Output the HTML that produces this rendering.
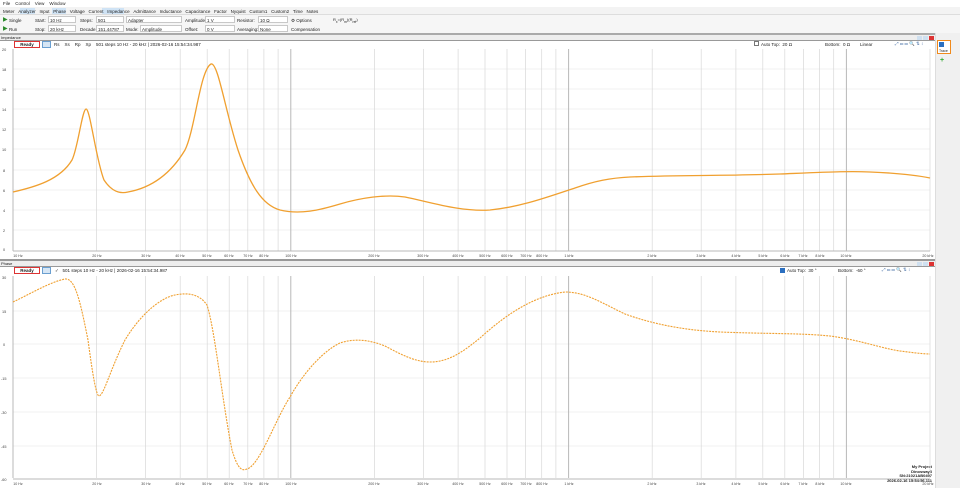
<!DOCTYPE html>
<html><head><meta charset="utf-8"><style>
*{margin:0;padding:0;box-sizing:border-box}
body{width:960px;height:488px;overflow:hidden;background:#fff;font-family:"Liberation Sans",sans-serif;font-size:4.5px;color:#222;position:relative}
.a{position:absolute;white-space:nowrap}
.in{position:absolute;height:7px;border:1px solid #c8c8c8;background:#fff}
</style></head><body>
<!-- menu -->
<div class="a" style="left:0;top:0;width:960px;height:7px;background:#fff"></div>
<div class="a" style="left:3px;top:1px">File&nbsp;&nbsp;&nbsp;&nbsp;Control&nbsp;&nbsp;&nbsp;&nbsp;View&nbsp;&nbsp;&nbsp;&nbsp;Window</div>
<!-- tabs -->
<div class="a" style="left:0;top:7px;width:960px;height:8px;background:#f3f3f3;border-bottom:1px solid #ddd"></div>
<div class="a" style="left:20px;top:8px;width:15px;height:6px;background:#cfe3f5"></div>
<div class="a" style="left:52px;top:8px;width:14px;height:6px;background:#cfe3f5"></div>
<div class="a" style="left:102px;top:8px;width:22px;height:6px;background:#cfe3f5"></div>
<div class="a" style="left:3px;top:9px">Meter&nbsp;&nbsp;&nbsp;Analyzer&nbsp;&nbsp;&nbsp;Input&nbsp;&nbsp;&nbsp;Phase&nbsp;&nbsp;&nbsp;Voltage&nbsp;&nbsp;&nbsp;Current&nbsp;&nbsp;&nbsp;Impedance&nbsp;&nbsp;&nbsp;Admittance&nbsp;&nbsp;&nbsp;Inductance&nbsp;&nbsp;&nbsp;Capacitance&nbsp;&nbsp;&nbsp;Factor&nbsp;&nbsp;&nbsp;Nyquist&nbsp;&nbsp;&nbsp;Custom1&nbsp;&nbsp;&nbsp;Custom2&nbsp;&nbsp;&nbsp;Time&nbsp;&nbsp;&nbsp;Notes</div>
<!-- toolbar -->
<div class="a" style="left:0;top:15px;width:960px;height:19px;background:#f6f6f6"></div>
<div class="a" style="left:3px;top:16px;color:#2a8a2a;font-size:6px">▶</div>
<div class="a" style="left:9px;top:18px">Single</div>
<div class="a" style="left:3px;top:25px;color:#2a8a2a;font-size:6px">▶</div>
<div class="a" style="left:9px;top:27px">Run</div>
<div class="a" style="left:35px;top:18px">Start:</div><div class="in" style="left:48px;top:16px;width:28px"></div><div class="a" style="left:50px;top:18px">10 Hz</div>
<div class="a" style="left:35px;top:27px">Stop:</div><div class="in" style="left:48px;top:25px;width:28px"></div><div class="a" style="left:50px;top:27px">20 kHz</div>
<div class="a" style="left:80px;top:18px">Steps:</div><div class="in" style="left:96px;top:16px;width:28px"></div><div class="a" style="left:98px;top:18px">501</div>
<div class="a" style="left:80px;top:27px">Decade:</div><div class="in" style="left:96px;top:25px;width:28px"></div><div class="a" style="left:98px;top:27px">151.44787</div>
<div class="in" style="left:126px;top:16px;width:56px"></div><div class="a" style="left:128px;top:18px">Adapter</div>
<div class="a" style="left:126px;top:27px">Mode:</div><div class="in" style="left:140px;top:25px;width:42px"></div><div class="a" style="left:142px;top:27px">Amplitude</div>
<div class="a" style="left:185px;top:18px">Amplitude:</div><div class="in" style="left:205px;top:16px;width:30px"></div><div class="a" style="left:207px;top:18px">1 V</div>
<div class="a" style="left:185px;top:27px">Offset:</div><div class="in" style="left:205px;top:25px;width:30px"></div><div class="a" style="left:207px;top:27px">0 V</div>
<div class="a" style="left:237px;top:18px">Resistor:</div><div class="in" style="left:258px;top:16px;width:30px"></div><div class="a" style="left:260px;top:18px">10 Ω</div>
<div class="a" style="left:237px;top:27px">Averaging:</div><div class="in" style="left:258px;top:25px;width:30px"></div><div class="a" style="left:260px;top:27px">None</div>
<div class="a" style="left:291px;top:18px">⚙ Options</div>
<div class="a" style="left:291px;top:27px">Compensation</div>
<div class="a" style="left:333px;top:17px;font-size:4px">R<sub>x</sub>=(R<sub>m</sub>)(R<sub>ref</sub>)</div>
<!-- Impedance title -->
<div class="a" style="left:0;top:33px;width:935px;height:2px;background:#aaa"></div>
<div class="a" style="left:0;top:35px;width:935px;height:5px;background:#eee"></div>
<div class="a" style="left:1px;top:35px;font-size:4px">Impedance</div>
<div class="a" style="left:0;top:40px;width:935px;height:1px;background:#999"></div>
<!-- header 1 -->
<div class="a" style="left:14px;top:41px;width:26px;height:7px;border:1px solid #d33;background:#fff;font-weight:bold;text-align:center;line-height:5px">Ready</div>
<div class="a" style="left:42px;top:41px;width:9px;height:7px;border:1px solid #6a9fd0;background:#d6e6f5"></div>
<div class="a" style="left:54px;top:42px">Rs&nbsp;&nbsp;&nbsp;&nbsp;Xs&nbsp;&nbsp;&nbsp;&nbsp;Rp&nbsp;&nbsp;&nbsp;&nbsp;Xp&nbsp;&nbsp;&nbsp;&nbsp;501 steps 10 Hz - 20 kHz | 2026-02-16 15:54:34.987</div>
<div class="a" style="left:754px;top:41px;width:5px;height:5px;border:1px solid #777"></div>
<div class="a" style="left:761px;top:42px">Auto Top:&nbsp;&nbsp;20 Ω</div>
<div class="a" style="left:825px;top:42px">Bottom:&nbsp;&nbsp;0 Ω</div>
<div class="a" style="left:860px;top:42px">Linear</div>
<div class="a" style="left:895px;top:41px;color:#5a7fb0">⤢ ▭ ▭ 🔍 ⇅ ↕</div>
<div class="a" style="left:917px;top:36px;width:5px;height:4px;background:#cfe0f0"></div>
<div class="a" style="left:923px;top:36px;width:5px;height:4px;background:#cfe0f0"></div>
<div class="a" style="left:929px;top:36px;width:5px;height:4px;background:#d33"></div>
<!-- sidebar -->
<div class="a" style="left:935px;top:33px;width:25px;height:455px;background:#f0f0f0;border-left:1px solid #ddd"></div>
<div class="a" style="left:937px;top:40px;width:14px;height:14px;border:1px solid #f08a1c;background:#fff"></div>
<div class="a" style="left:939px;top:42px;width:5px;height:5px;background:#2b6fc0"></div>
<div class="a" style="left:939px;top:49px;font-size:3.5px">Trace</div>
<div class="a" style="left:940px;top:57px;color:#3a3;font-size:7px;font-weight:bold">+</div>
<!-- phase title -->
<div class="a" style="left:0;top:259px;width:935px;height:2px;background:#999"></div>
<div class="a" style="left:0;top:261px;width:935px;height:5px;background:#eee"></div>
<div class="a" style="left:1px;top:261px;font-size:4px">Phase</div>
<div class="a" style="left:0;top:266px;width:935px;height:1px;background:#999"></div>
<div class="a" style="left:917px;top:262px;width:5px;height:4px;background:#cfe0f0"></div>
<div class="a" style="left:923px;top:262px;width:5px;height:4px;background:#cfe0f0"></div>
<div class="a" style="left:929px;top:262px;width:5px;height:4px;background:#d33"></div>
<div class="a" style="left:14px;top:267px;width:26px;height:7px;border:1px solid #d33;background:#fff;font-weight:bold;text-align:center;line-height:5px">Ready</div>
<div class="a" style="left:42px;top:267px;width:9px;height:7px;border:1px solid #6a9fd0;background:#d6e6f5"></div>
<div class="a" style="left:55px;top:268px">✓&nbsp;&nbsp;&nbsp;501 steps 10 Hz - 20 kHz | 2026-02-16 15:54:34.987</div>
<div class="a" style="left:780px;top:268px;width:5px;height:5px;background:#2b6fc0"></div>
<div class="a" style="left:787px;top:268px">Auto Top:&nbsp;&nbsp;30 °</div>
<div class="a" style="left:838px;top:268px">Bottom:&nbsp;&nbsp;-60 °</div>
<div class="a" style="left:882px;top:267px;color:#5a7fb0">⤢ ▭ ▭ 🔍 ⇅ ↕</div>
<!-- footer text -->
<div class="a" style="left:880px;top:465px;width:52px;text-align:right;font-size:4px;line-height:4.5px;font-weight:bold">My Project<br>Dinosway3<br>SN:21021AB0497<br>2026-02-16 15:54:56.111</div>

<svg class="a" style="left:0;top:0" width="935" height="488" font-family="Liberation Sans" font-size="4">
<g id="grid1" stroke="#e6e6e6" stroke-width="0.6">
<path d="M13 69H930M13 89H930M13 109H930M13 129H930M13 149H930M13 170H930M13 190H930M13 210H930M13 230H930"/>
<path d="M13 311H930M13 344H930M13 378H930M13 412H930M13 446H930"/>
</g>
<g stroke="#d8d8d8" stroke-width="0.7">
<path id="v" d="M96.6 49V251M145.5 49V251M180.2 49V251M207.2 49V251M229.2 49V251M247.8 49V251M263.9 49V251M278.1 49V251M374.4 49V251M423.4 49V251M458.1 49V251M485 49V251M507 49V251M525.6 49V251M541.7 49V251M555.9 49V251M652.2 49V251M701.2 49V251M735.9 49V251M762.8 49V251M784.8 49V251M803.4 49V251M819.5 49V251M833.7 49V251M930 49V251"/>
<use href="#v" transform="translate(0,227)"/>
</g>
<g stroke="#b8b8b8" stroke-width="1">
<path id="m" d="M13 49V251M290.8 49V251M568.6 49V251M846.4 49V251"/>
<use href="#m" transform="translate(0,227)"/>
<path d="M13 251H930M13 479H930"/>
</g>
<g fill="#444" font-size="3.8">
<text x="2" y="51">20</text><text x="2" y="71">18</text><text x="2" y="91">16</text><text x="2" y="111">14</text><text x="2" y="131">12</text><text x="2" y="151">10</text><text x="3" y="172">8</text><text x="3" y="192">6</text><text x="3" y="212">4</text><text x="3" y="232">2</text><text x="3" y="251">0</text>
<text x="2" y="279">30</text><text x="2" y="313">15</text><text x="3" y="346">0</text><text x="1" y="380">-15</text><text x="1" y="414">-30</text><text x="1" y="448">-45</text><text x="1" y="481">-60</text>
</g>
<g id="xl" fill="#444" font-size="3.6" text-anchor="middle">
<text x="18" y="257">10 Hz</text><text x="97" y="257">20 Hz</text><text x="146" y="257">30 Hz</text><text x="180" y="257">40 Hz</text><text x="207" y="257">50 Hz</text><text x="229" y="257">60 Hz</text><text x="248" y="257">70 Hz</text><text x="264" y="257">80 Hz</text><text x="291" y="257">100 Hz</text><text x="374" y="257">200 Hz</text><text x="423" y="257">300 Hz</text><text x="458" y="257">400 Hz</text><text x="485" y="257">500 Hz</text><text x="507" y="257">600 Hz</text><text x="526" y="257">700 Hz</text><text x="542" y="257">800 Hz</text><text x="569" y="257">1 kHz</text><text x="652" y="257">2 kHz</text><text x="701" y="257">3 kHz</text><text x="736" y="257">4 kHz</text><text x="763" y="257">5 kHz</text><text x="785" y="257">6 kHz</text><text x="803" y="257">7 kHz</text><text x="820" y="257">8 kHz</text><text x="846" y="257">10 kHz</text><text x="928" y="257">20 kHz</text>
</g>
<use href="#xl" transform="translate(0,228)"/>
<path fill="none" stroke="#f0a030" stroke-width="1.3" d="M13 192 C35 187,60 180,72 160 C78 148,82 110,86 109 C90 108,96 160,104 180 C112 192,120 194,128 192 C150 188,170 175,185 150 C195 130,200 70,211 64 C218 62,225 110,238 150 C250 185,262 205,280 210 C300 215,320 210,340 204 C360 198,385 194,405 197 C430 202,460 212,490 210 C520 207,545 198,575 188 C595 181,610 178,630 177 C680 175,720 176,780 174 C830 172,850 171,870 172 C895 173,915 175,930 178"/>
<path fill="none" stroke="#f0a030" stroke-width="1.1" stroke-dasharray="2 1" d="M13 302 C30 294,50 282,65 279 C75 278,80 300,88 340 C92 370,96 396,99 396 C104 395,110 370,125 340 C140 315,160 298,175 295 C190 292,200 295,207 305 C215 330,222 400,232 450 C238 470,242 471,247 469 C260 465,275 420,290 397 C305 370,325 350,340 343 C355 338,370 340,385 346 C400 354,415 362,430 362 C450 362,465 350,480 338 C500 320,530 296,565 292 C585 292,600 302,625 314 C650 323,680 330,720 332 C770 334,800 333,830 336 C860 340,880 348,900 351 C915 353,925 354,930 354"/>
</svg>
</body></html>
